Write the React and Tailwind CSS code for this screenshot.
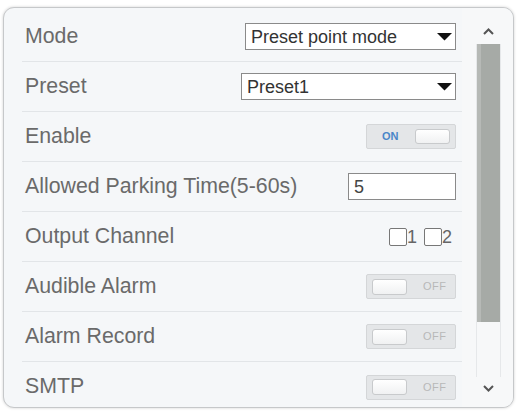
import React from "react";

const font = { fontFamily: '"Liberation Sans", Arial, sans-serif' };

function Row({ label, children, last }) {
  return (
    <div
      className={`flex h-[50px] shrink-0 items-center justify-between pl-[3px] pr-[6px] ${
        last ? "" : "border-b border-[#e2e5e8]"
      }`}
    >
      <span className="text-[21.3px] leading-none text-[#6a6a6a]">{label}</span>
      {children}
    </div>
  );
}

function Select({ value, width }) {
  return (
    <div
      className={`flex h-[27px] items-center justify-between border border-[#8a8a8a] bg-white pl-[5px] pr-[3px] ${width}`}
    >
      <span className="text-[18px] leading-none text-[#333]">{value}</span>
      <svg width="15" height="8" viewBox="0 0 15 8">
        <polygon points="0,0 15,0 7.5,7.5" fill="#111" />
      </svg>
    </div>
  );
}

function Toggle({ on }) {
  return (
    <div className="flex h-[25px] w-[90px] items-center justify-between rounded-[2px] border border-[#d4d6d8] bg-[#e4e6e8] px-[5px]">
      {on ? (
        <>
          <span className="w-[36px] pl-[10px] text-[11px] font-bold leading-none text-[#4a86c8]">
            ON
          </span>
          <div className="h-[15px] w-[35px] rounded-[3px] border border-[#c8cacc] bg-gradient-to-b from-white to-[#f0f1f2]" />
        </>
      ) : (
        <>
          <div className="h-[16px] w-[35px] rounded-[3px] border border-[#c8cacc] bg-gradient-to-b from-white to-[#f0f1f2]" />
          <span className="w-[36px] pl-[9px] text-[11px] leading-none tracking-[0.5px] text-[#b8b8b8]">
            OFF
          </span>
        </>
      )}
    </div>
  );
}

function Check({ n }) {
  return (
    <div className="flex items-center">
      <div className="h-[18px] w-[18px] rounded-[2px] border-[1.5px] border-[#777] bg-white" />
      <span className="text-[18px] leading-none text-[#666]">{n}</span>
    </div>
  );
}

function Chevron({ up }) {
  return (
    <svg width="11" height="7" viewBox="0 0 11 7">
      <polyline
        points={up ? "1,6 5.5,1.5 10,6" : "1,1 5.5,5.5 10,1"}
        fill="none"
        stroke="#555"
        strokeWidth="2"
      />
    </svg>
  );
}

export default function App() {
  return (
    <div className="h-[412px] w-[520px] bg-white pl-[3px] pt-[7px]" style={font}>
      <div className="flex h-[401px] w-[511px] overflow-hidden rounded-[11px] border border-[#c6c8ca] bg-[#f5f7f9] shadow-[0_0_3px_rgba(0,0,0,0.18)]">
        <div className="flex w-[458px] flex-col overflow-hidden pl-[18px] pt-[4px]">
          <Row label="Mode">
            <Select value="Preset point mode" width="w-[211px]" />
          </Row>
          <Row label="Preset">
            <Select value="Preset1" width="w-[215px]" />
          </Row>
          <Row label="Enable">
            <Toggle on />
          </Row>
          <Row label="Allowed Parking Time(5-60s)">
            <div className="flex h-[27px] w-[108px] items-center border border-[#8a8a8a] bg-white pl-[5px]">
              <span className="text-[18px] leading-none text-[#444]">5</span>
            </div>
          </Row>
          <Row label="Output Channel">
            <div className="flex items-center gap-[7px] pr-[4px]">
              <Check n="1" />
              <Check n="2" />
            </div>
          </Row>
          <Row label="Audible Alarm">
            <Toggle />
          </Row>
          <Row label="Alarm Record">
            <Toggle />
          </Row>
          <Row label="SMTP" last>
            <Toggle />
          </Row>
        </div>
        <div className="flex w-[51px] flex-col items-center bg-[#f7f8f9] pl-[2px]">
          <div className="flex h-[36px] items-end pb-[9px]">
            <Chevron up />
          </div>
          <div className="flex h-[333px] w-[25px] flex-col border-x border-[#e6e8ea]">
            <div className="flex h-[278px] w-full">
              <div className="w-[4px] bg-[#b6b9b6]" />
              <div className="flex-1 bg-[#a6aaa6]" />
            </div>
          </div>
          <div className="flex flex-1 items-start pt-[8px]">
            <Chevron />
          </div>
        </div>
      </div>
    </div>
  );
}
